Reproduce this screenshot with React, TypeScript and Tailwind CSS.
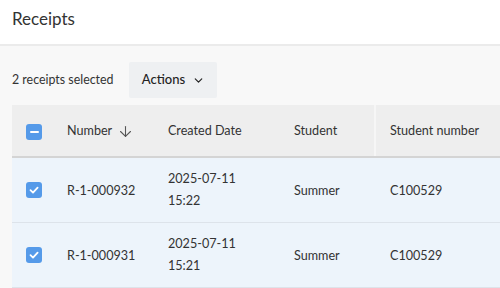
import React from "react";
import { ArrowDown, ChevronDown } from "lucide-react";

function Check({ mode }: { mode: "check" | "minus" }) {
  return (
    <div className="w-4 h-4 rounded-[3px] bg-[#559ae9] flex items-center justify-center">
      {mode === "check" ? (
        <svg width="12" height="12" viewBox="0 0 12 12" fill="none">
          <path d="M2.5 6.2 L5 8.6 L9.6 3.6" stroke="white" strokeWidth="1.8" strokeLinecap="round" strokeLinejoin="round" />
        </svg>
      ) : (
        <div className="w-[9px] h-[2px] bg-white rounded-sm" />
      )}
    </div>
  );
}

const rows = [
  { n: "R-1-000932", d: "2025-07-11", t: "15:22", s: "Summer", sn: "C100529" },
  { n: "R-1-000931", d: "2025-07-11", t: "15:21", s: "Summer", sn: "C100529" },
];

export default function App() {
  return (
    <div className="w-[500px] h-[288px] overflow-hidden bg-[#f8f8f8] text-[#333] font-['Lato','Liberation_Sans',sans-serif]">
      <div className="h-[44px] bg-white border-b-2 border-[#ebebeb] box-content flex items-center px-3">
        <h1 className="text-[17px] leading-none text-[#333] -mt-[7px]">Receipts</h1>
      </div>
      <div className="flex items-center px-3 pt-[16px] pb-[7px]">
        <span className="text-[12.4px] mr-[15px]">2 receipts selected</span>
        <button className="w-[88px] h-[36px] bg-[#eef0f2] rounded-[2px] flex items-center justify-center gap-[7px] pl-[2px] text-[13px] font-medium text-[#222]">
          Actions
          <ChevronDown size={13} strokeWidth={2.2} />
        </button>
      </div>
      <div className="ml-3 w-[488px]">
        <div className="h-[51px] bg-[#eeeeee] border-b-2 border-[#d4d4d4] box-content flex items-stretch text-[12.6px]">
          <div className="w-[43px] pl-[14px] pt-[2px] flex items-center"><Check mode="minus" /></div>
          <div className="w-[101px] pl-3 pt-[2px] flex items-center gap-[5px]">
            Number <ArrowDown size={17} strokeWidth={1.5} className="text-[#555]" />
          </div>
          <div className="w-[126px] pl-3 pt-[2px] flex items-center">Created Date</div>
          <div className="w-[92px] pl-3 pt-[2px] flex items-center">Student</div>
          <div className="flex-1 border-l-2 border-[#f6f6f6] pl-[14px] pt-[2px] flex items-center">Student number</div>
        </div>
        {rows.map((r) => (
          <div key={r.n} className="h-[64px] bg-[#edf4fb] border-b border-[#dde3ea] box-content flex items-center text-[12.6px]">
            <div className="w-[43px] pl-[14px] flex items-center"><Check mode="check" /></div>
            <div className="w-[101px] pl-3 pt-[2px]">{r.n}</div>
            <div className="w-[126px] pl-3 leading-[22px]">
              <div>{r.d}</div>
              <div>{r.t}</div>
            </div>
            <div className="w-[92px] pl-3 pt-[2px]">{r.s}</div>
            <div className="flex-1 pl-4 pt-[2px]">{r.sn}</div>
          </div>
        ))}
      </div>
    </div>
  );
}
